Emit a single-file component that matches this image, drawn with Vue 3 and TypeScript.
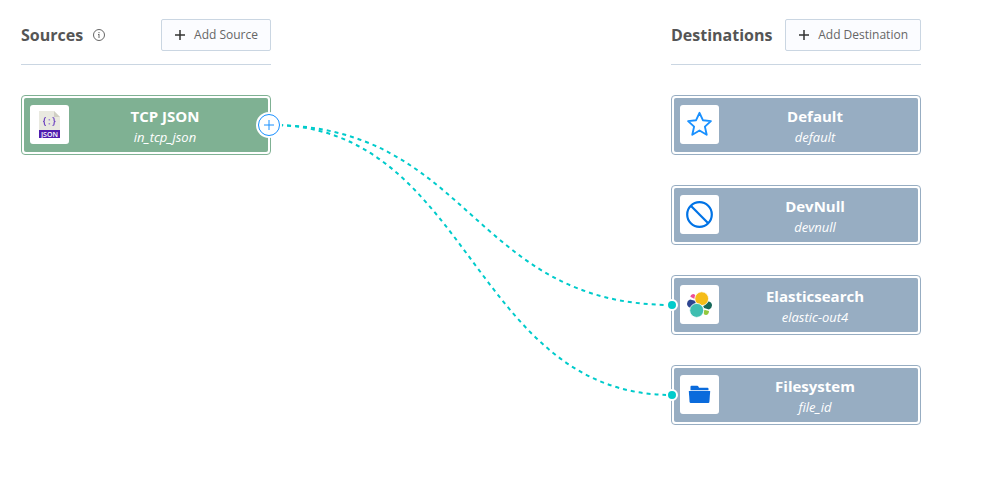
<script setup lang="ts">
import { computed } from 'vue'

interface FlowNode {
  title: string
  id: string
  icon: 'json' | 'star' | 'ban' | 'elastic' | 'folder'
  linked: boolean
}

const source: FlowNode = { title: 'TCP JSON', id: 'in_tcp_json', icon: 'json', linked: true }

const destinations: FlowNode[] = [
  { title: 'Default', id: 'default', icon: 'star', linked: false },
  { title: 'DevNull', id: 'devnull', icon: 'ban', linked: false },
  { title: 'Elasticsearch', id: 'elastic-out4', icon: 'elastic', linked: true },
  { title: 'Filesystem', id: 'file_id', icon: 'folder', linked: true },
]

// Wire geometry, measured from the vertical centre of the first row of cards
const rowPitch = 90
const span = 401
const wires = computed(() =>
  destinations
    .map((node, row) => ({ node, y: row * rowPitch + 1 }))
    .filter(({ node }) => node.linked)
    .map(({ node, y }) => ({
      id: node.id,
      d: `M0 1C${span / 2} 1 ${span / 2} ${y} ${span} ${y}`,
    })),
)
</script>

<template>
  <main class="flow">
    <section class="column">
      <header class="head">
        <h2>Sources</h2>
        <svg class="info" viewBox="0 0 12 12" role="img" aria-label="About sources">
          <circle cx="6" cy="6" r="5.5" />
          <path d="M6 5v4M6 3v1.200M5 5.500h1" />
        </svg>
        <button type="button" class="add">
          <svg viewBox="0 0 10 10" aria-hidden="true"><path d="M5 0v10M0 5h10" /></svg>
          Add Source
        </button>
      </header>
      <div class="cards">
        <article class="card source">
          <div class="body">
            <span class="tile">
              <svg class="json" viewBox="0 0 21 27" aria-hidden="true">
                <path d="M0 0h15l6 6v21H0z" fill="#e9e9e0" />
                <path d="M15 0l6 6h-6z" fill="#d0cfc4" />
                <path d="M0 19h21v8H0z" fill="#4f1dae" />
                <path
                  d="M7 6.500q-1.600 0-1.600 1.500v1.200q0 1.300-1.400 1.300 1.400 0 1.400 1.300V13q0 1.500 1.600 1.500M13.500 6.500q1.600 0 1.600 1.500v1.200q0 1.300 1.400 1.300-1.400 0-1.400 1.300V13q0 1.500-1.600 1.500"
                  fill="none"
                  stroke="#7148c0"
                  stroke-width="1.200"
                />
                <path d="M9.600 8h1.500v1.500H9.600zM9.600 12h1.500v1.500H9.600z" fill="#a48bd6" />
                <text x="10.500" y="25.500" text-anchor="middle">JSON</text>
              </svg>
            </span>
            <div class="label">
              <h3>{{ source.title }}</h3>
              <p>{{ source.id }}</p>
            </div>
          </div>
          <svg class="wires" aria-hidden="true">
            <path v-for="wire in wires" :key="wire.id" :d="wire.d" />
          </svg>
          <button type="button" class="connect" aria-label="Connect source">
            <svg viewBox="0 0 10 10" aria-hidden="true"><path d="M5 0v10M0 5h10" /></svg>
          </button>
        </article>
      </div>
    </section>

    <section class="column">
      <header class="head">
        <h2>Destinations</h2>
        <button type="button" class="add">
          <svg viewBox="0 0 10 10" aria-hidden="true"><path d="M5 0v10M0 5h10" /></svg>
          Add Destination
        </button>
      </header>
      <div class="cards">
        <article v-for="node in destinations" :key="node.id" class="card">
          <div class="body">
            <span class="tile">
              <svg v-if="node.icon === 'star'" class="glyph" viewBox="0 0 27 27" aria-hidden="true">
                <path
                  d="M13.500 1.800l3.400 7.400 8 .9-6 5.500 1.800 8.200-7.200-4.300-7.200 4.300 1.800-8.200-6-5.500 8-.9z"
                  fill="none"
                  stroke="#1890ff"
                  stroke-width="1.900"
                  stroke-linejoin="round"
                />
              </svg>
              <svg v-else-if="node.icon === 'ban'" class="glyph" viewBox="0 0 27 27" aria-hidden="true">
                <g fill="none" stroke="#0073e6" stroke-width="2.200">
                  <circle cx="13.500" cy="13.500" r="12.300" />
                  <path d="M4.800 4.800l17.400 17.400" />
                </g>
              </svg>
              <svg v-else-if="node.icon === 'elastic'" class="glyph" viewBox="0 0 27 27" aria-hidden="true">
                <path d="M4.300 5.800q.2-2.600 2.700-2.900 1.200 0 2.200 1l-.5 4z" fill="#ee4f97" />
                <path d="M4 8.500l5.200 1.300.8 2.300-5.300 4.800Q1 16 1 12.600 1.200 9.500 4 8.500z" fill="#2d4590" />
                <path d="M22.500 10.200q3.500 1 3.500 4.200-.2 3-3 4l-5-1.300-.8-2.200z" fill="#17695a" />
                <path d="M18.200 18.700l4.800 1.300q-.1 3.700-3 4.100-1.200 0-2.200-1z" fill="#93c83e" />
                <g stroke="#fff" stroke-width=".8">
                  <circle cx="15.700" cy="7.700" r="6.900" fill="#f5bc18" />
                  <circle cx="10.700" cy="19.400" r="7" fill="#3ebeb0" />
                </g>
              </svg>
              <svg v-else class="glyph" viewBox="0 0 27 27" aria-hidden="true">
                <path
                  d="M4.500 9.300V5.800q0-1 1-1h5.700q.8 0 1.200.8l.6 1.100h8.500q1 0 1 1v1.600z"
                  fill="#0a6bdc"
                />
                <path d="M2.800 10h21.400l-.8 11q-.1 1-1.100 1H4.700q-1 0-1.100-1z" fill="#0a6bdc" />
              </svg>
            </span>
            <div class="label">
              <h3>{{ node.title }}</h3>
              <p>{{ node.id }}</p>
            </div>
          </div>
          <span v-if="node.linked" class="port"></span>
        </article>
      </div>
    </section>
  </main>
</template>

<style scoped>
.flow {
  display: grid;
  grid-template-columns: 250px 250px;
  column-gap: 400px;
  padding: 19px 21px;
  font-family: 'Open Sans', 'Noto Sans', sans-serif;
  color: #555;
}

.head {
  display: flex;
  align-items: center;
  padding-bottom: 13px;
  border-bottom: 1px solid #cad6e2;
}

h2 {
  margin: 0;
  font-size: 16px;
  line-height: 24px;
  font-weight: 700;
}

.info {
  width: 12px;
  height: 12px;
  margin-left: 10px;
  fill: none;
  stroke: #666;
  stroke-width: 1;
}

.add {
  display: flex;
  align-items: center;
  gap: 9px;
  height: 32px;
  margin-left: auto;
  padding: 0 12px 0 13px;
  border: 1px solid #cad6e2;
  border-radius: 2px;
  background: #fbfcff;
  color: #666;
  font: inherit;
  font-size: 12px;
  line-height: 20px;
  cursor: pointer;
}

.add svg {
  width: 10px;
  height: 10px;
  fill: none;
  stroke: #333;
  stroke-width: 1.5;
}

.cards {
  display: flex;
  flex-direction: column;
  gap: 30px;
  padding-top: 30px;
}

.card {
  --tone: #97adc2;
  position: relative;
  height: 60px;
  box-sizing: border-box;
  padding: 2px;
  border: 1px solid var(--tone);
  border-radius: 4px;
  background: #fff;
}

.card.source {
  --tone: #7fb193;
}

.body {
  display: flex;
  align-items: flex-start;
  height: 100%;
  box-sizing: border-box;
  padding: 7px 7px 0 6px;
  border-radius: 2px;
  background: var(--tone);
}

.tile {
  display: flex;
  align-items: center;
  justify-content: center;
  width: 39px;
  height: 39px;
  border-radius: 3px;
  background: #fff;
}

.glyph {
  width: 27px;
  height: 27px;
}

.json {
  width: 21px;
  height: 27px;
}

.json text {
  font: 600 7px 'Open Sans', sans-serif;
  fill: #fff;
}

.label {
  flex: 1;
  color: #fff;
  text-align: center;
}

h3,
p {
  margin: 0;
}

h3 {
  font-size: 15px;
  line-height: 22px;
  font-weight: 700;
}

p {
  font-size: 13px;
  line-height: 20px;
  font-style: italic;
}

.wires {
  position: absolute;
  top: 28px;
  left: 249px;
  width: 402px;
  height: 280px;
  fill: none;
  stroke: #00cbcb;
  stroke-width: 2;
  stroke-dasharray: 4 4;
  pointer-events: none;
}

.connect {
  position: absolute;
  top: 18px;
  right: -10px;
  display: flex;
  align-items: center;
  justify-content: center;
  width: 22px;
  height: 22px;
  padding: 0;
  border: 1px solid #1890ff;
  border-radius: 50%;
  background: #fff;
  box-shadow: 0 0 0 2px #fff;
  cursor: pointer;
}

.connect svg {
  width: 10px;
  height: 10px;
  fill: none;
  stroke: #1890ff;
  stroke-width: 1;
}

.port {
  position: absolute;
  top: 23px;
  left: -6px;
  width: 8px;
  height: 8px;
  border: 2px solid #fff;
  border-radius: 50%;
  background: #00cbcb;
}
</style>

<style>
body {
  background: #fff;
}
</style>
